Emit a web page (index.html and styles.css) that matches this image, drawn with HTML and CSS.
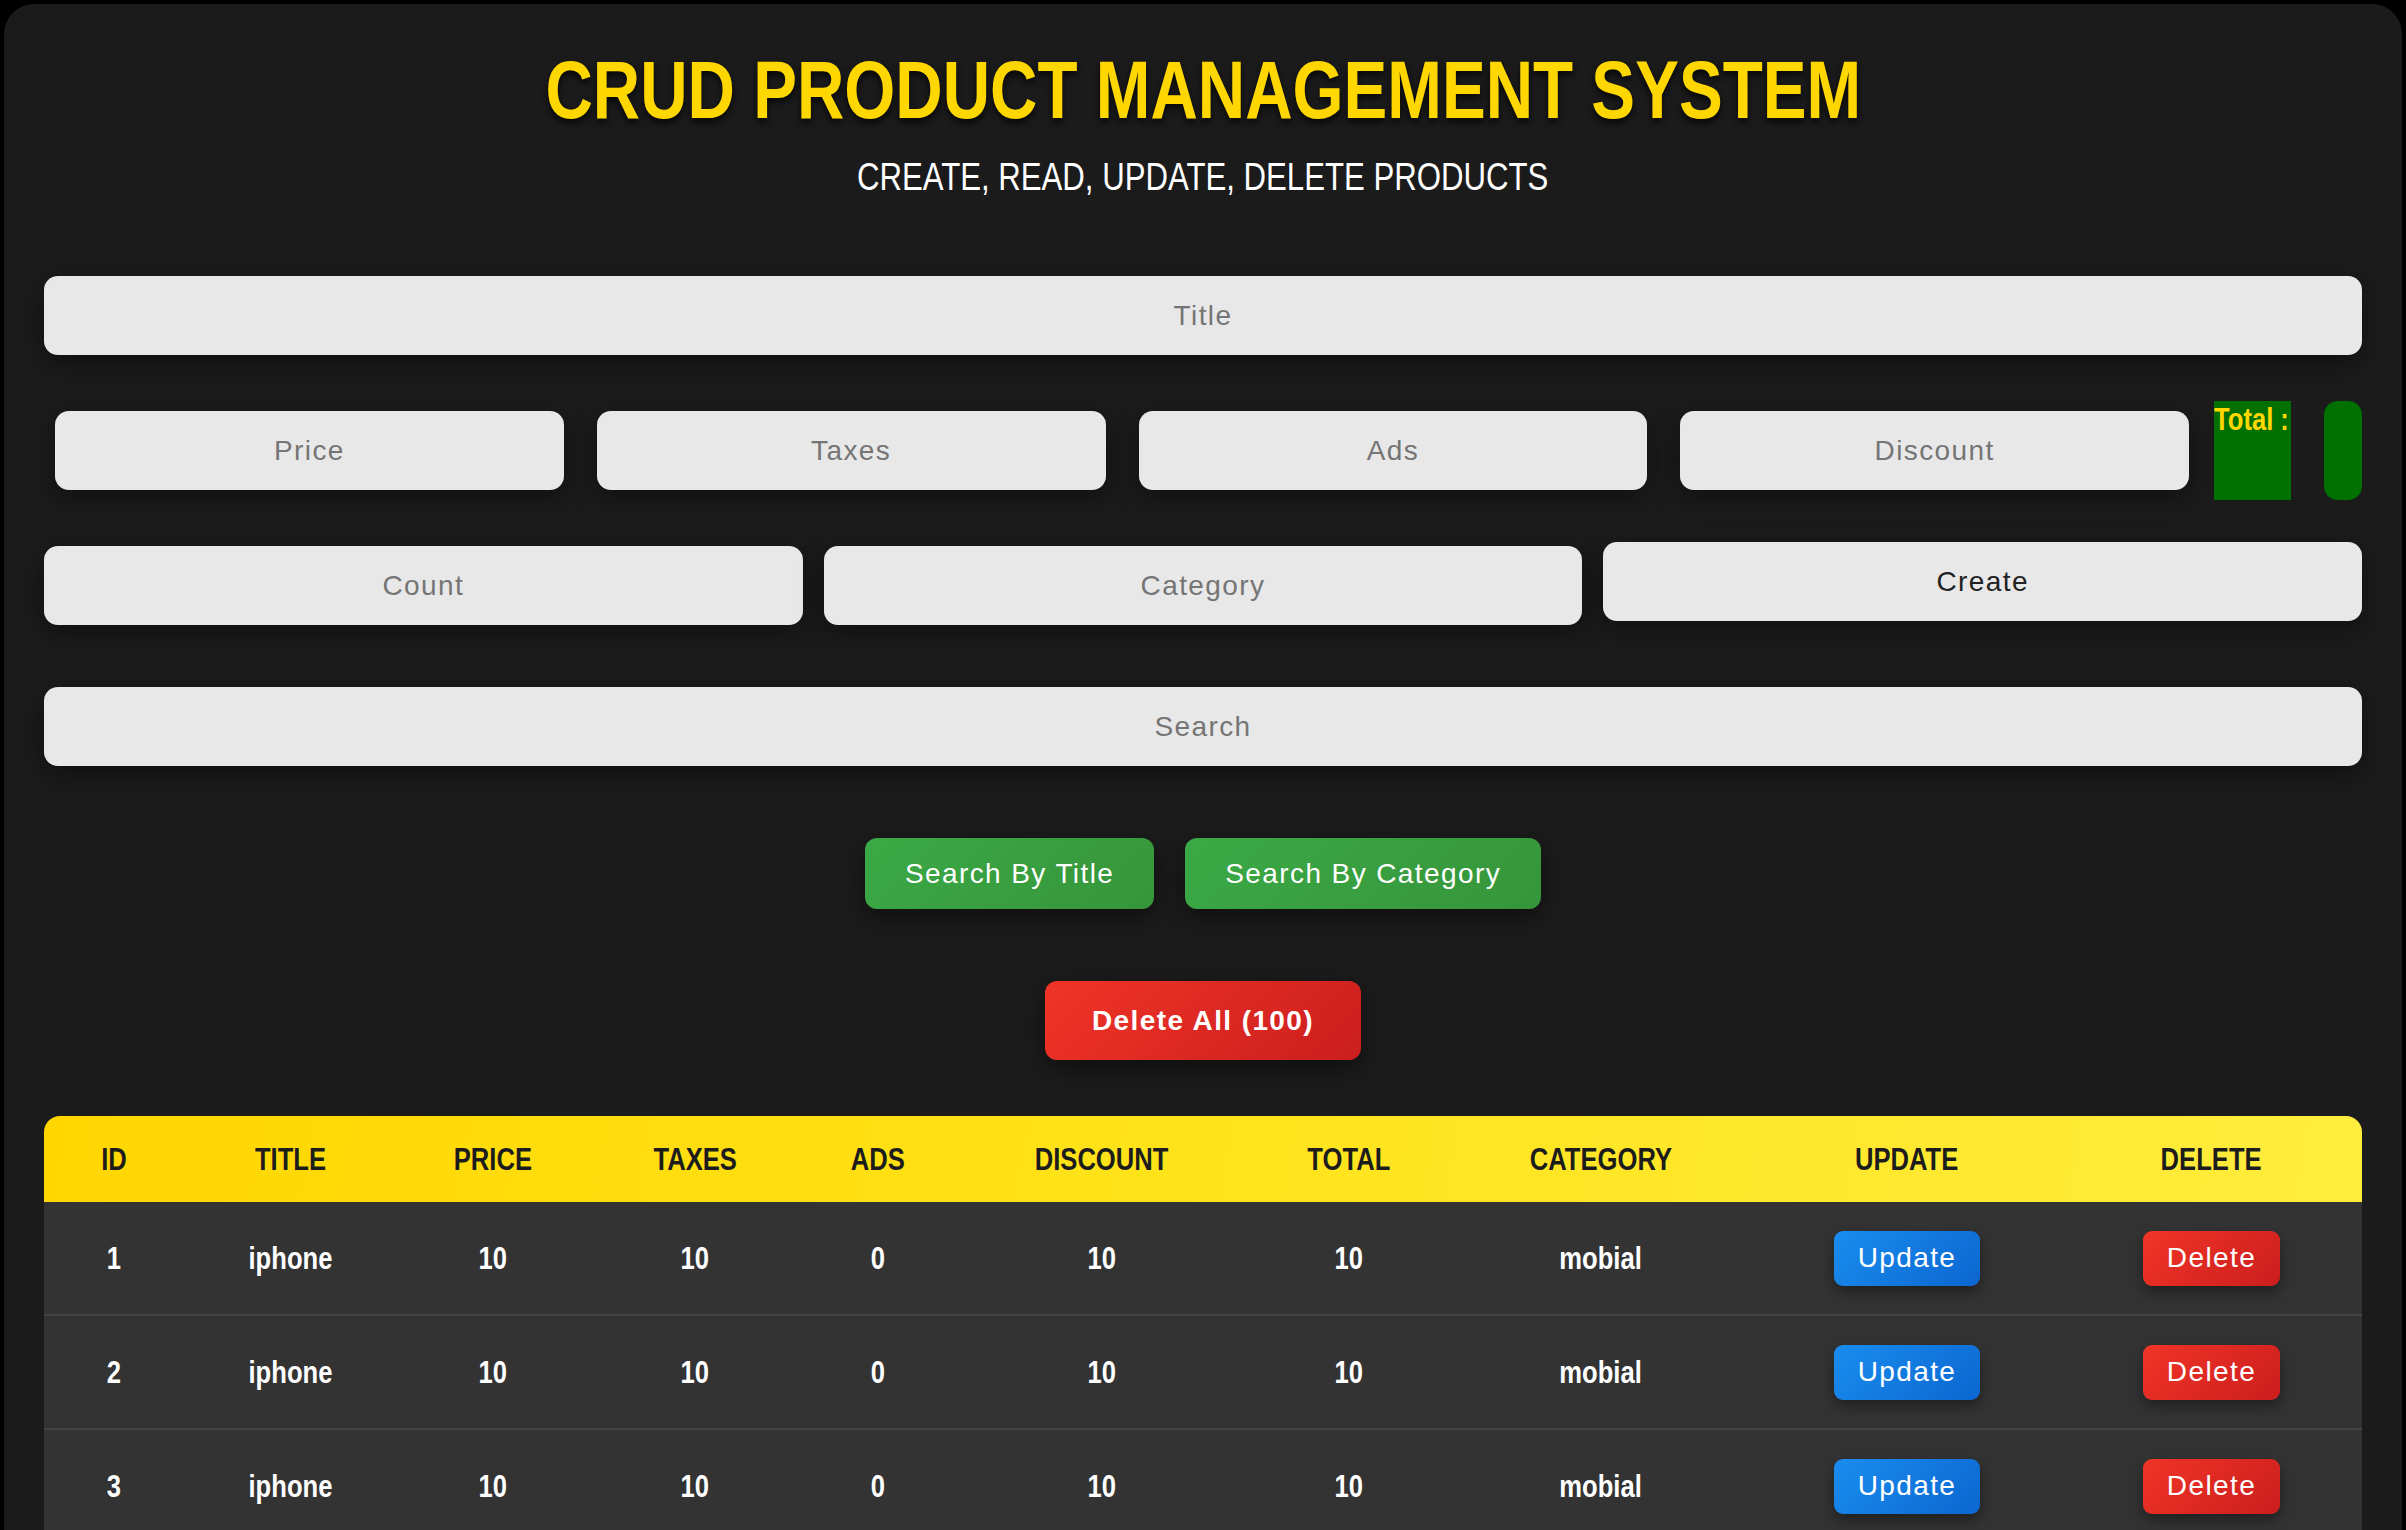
FILE: index.html
```html
<!DOCTYPE html>
<html lang="en">
<head>
<meta charset="utf-8">
<title>CRUD Product Management System</title>
<link rel="stylesheet" href="styles.css">
</head>
<body>
<div class="crud">
  <header class="head">
    <h1 class="head-title"><span class="narrow">CRUD PRODUCT MANAGEMENT SYSTEM</span></h1>
    <p class="head-sub"><span class="narrow">CREATE, READ, UPDATE, DELETE PRODUCTS</span></p>
  </header>

  <section class="form">
    <input class="field field-title" type="text" placeholder="Title">
    <div class="price-row">
      <input class="field field-small" type="text" placeholder="Price">
      <input class="field field-small" type="text" placeholder="Taxes">
      <input class="field field-small" type="text" placeholder="Ads">
      <input class="field field-small" type="text" placeholder="Discount">
      <span class="total-label"><span class="narrow narrow-left">Total :</span></span>
      <span class="total-value"></span>
    </div>
    <div class="count-row">
      <input class="field field-low" type="text" placeholder="Count">
      <input class="field field-low" type="text" placeholder="Category">
      <button class="btn-create" type="button">Create</button>
    </div>
  </section>

  <section class="search">
    <input class="field field-search" type="text" placeholder="Search">
    <div class="search-btns">
      <button class="btn-green" type="button">Search By Title</button>
      <button class="btn-green" type="button">Search By Category</button>
    </div>
  </section>

  <div class="delete-all">
    <button class="btn-delete-all" type="button">Delete All (100)</button>
  </div>

  <table class="products">
    <colgroup>
      <col class="c-id"><col class="c-title"><col class="c-price"><col class="c-taxes"><col class="c-ads">
      <col class="c-discount"><col class="c-total"><col class="c-category"><col class="c-update"><col class="c-delete">
    </colgroup>
    <thead>
      <tr>
        <th><span class="narrow">ID</span></th>
        <th><span class="narrow">Title</span></th>
        <th><span class="narrow">Price</span></th>
        <th><span class="narrow">Taxes</span></th>
        <th><span class="narrow">Ads</span></th>
        <th><span class="narrow">Discount</span></th>
        <th><span class="narrow">Total</span></th>
        <th><span class="narrow">Category</span></th>
        <th><span class="narrow">Update</span></th>
        <th><span class="narrow">Delete</span></th>
      </tr>
    </thead>
    <tbody>
      <tr>
        <td><span class="narrow">1</span></td>
        <td><span class="narrow">iphone</span></td>
        <td><span class="narrow">10</span></td>
        <td><span class="narrow">10</span></td>
        <td><span class="narrow">0</span></td>
        <td><span class="narrow">10</span></td>
        <td><span class="narrow">10</span></td>
        <td><span class="narrow">mobial</span></td>
        <td><button class="btn-row btn-update" type="button">Update</button></td>
        <td><button class="btn-row btn-del" type="button">Delete</button></td>
      </tr>
      <tr>
        <td><span class="narrow">2</span></td>
        <td><span class="narrow">iphone</span></td>
        <td><span class="narrow">10</span></td>
        <td><span class="narrow">10</span></td>
        <td><span class="narrow">0</span></td>
        <td><span class="narrow">10</span></td>
        <td><span class="narrow">10</span></td>
        <td><span class="narrow">mobial</span></td>
        <td><button class="btn-row btn-update" type="button">Update</button></td>
        <td><button class="btn-row btn-del" type="button">Delete</button></td>
      </tr>
      <tr>
        <td><span class="narrow">3</span></td>
        <td><span class="narrow">iphone</span></td>
        <td><span class="narrow">10</span></td>
        <td><span class="narrow">10</span></td>
        <td><span class="narrow">0</span></td>
        <td><span class="narrow">10</span></td>
        <td><span class="narrow">10</span></td>
        <td><span class="narrow">mobial</span></td>
        <td><button class="btn-row btn-update" type="button">Update</button></td>
        <td><button class="btn-row btn-del" type="button">Delete</button></td>
      </tr>
    </tbody>
  </table>
</div>
</body>
</html>
```

FILE: styles.css
```css
* {
  box-sizing: border-box;
}

html {
  overflow: hidden;
}

body {
  margin: 0;
  padding: 4px;
  background: #000;
  color: #fff;
  font-family: "Liberation Sans", Arial, sans-serif;
}

/* Arial-Narrow look: Liberation Sans squeezed horizontally */
.narrow {
  display: inline-block;
  white-space: nowrap;
  transform: scaleX(0.8);
  transform-origin: 50% 50%;
}

.narrow-left {
  transform-origin: 0 50%;
}

.crud {
  background: #1b1b1b;
  border-radius: 30px;
  padding: 38px 40px 60px;
}

/* Header */
.head {
  text-align: center;
}

.head-title {
  margin: 0;
  font-size: 82px;
  line-height: 96px;
  font-weight: 700;
  color: #ffd700;
  text-shadow: 0 4px 8px rgba(0, 0, 0, 0.75);
}

.head-sub {
  margin: 16px 0 0;
  font-size: 38px;
  line-height: 46px;
  font-weight: 400;
  color: #fff;
}

.head-sub .narrow {
  transform: scaleX(0.82);
}

/* Inputs */
.field {
  display: block;
  width: 100%;
  height: 79px;
  border: none;
  border-radius: 14px;
  background: #e8e8e8;
  color: #222;
  font-family: "Liberation Sans", Arial, sans-serif;
  font-size: 28px;
  letter-spacing: 1.4px;
  text-align: center;
  padding: 0 16px;
  outline: none;
  box-shadow: 0 8px 24px rgba(0, 0, 0, 0.4);
}

.field::placeholder {
  color: #757575;
}

.field-title {
  margin-top: 76px;
}

.price-row {
  display: flex;
  align-items: stretch;
  gap: 11px;
  height: 99px;
  margin-top: 46px;
}

.field-small {
  flex: 1 1 0;
  width: auto;
  min-width: 0;
  height: auto;
  margin: 10px 11px;
}

.total-label {
  flex: 0 0 77px;
  width: 77px;
  min-width: 0;
  margin-left: 3px;
  background: #007000;
  color: #ffd700;
  font-size: 32px;
  font-weight: 700;
  white-space: nowrap;
}

.total-value {
  flex: 0 0 38px;
  margin-left: 22px;
  border-radius: 14px;
  background: #007000;
}

.count-row {
  display: grid;
  grid-template-columns: 1fr 1fr 1fr;
  gap: 21px;
  align-items: start;
  margin-top: 42px;
}

.field-low {
  margin-top: 4px;
}

.btn-create {
  height: 79px;
  border: none;
  border-radius: 14px;
  background: #e8e8e8;
  color: #222;
  font-family: "Liberation Sans", Arial, sans-serif;
  font-size: 28px;
  letter-spacing: 1.4px;
  box-shadow: 0 8px 24px rgba(0, 0, 0, 0.4);
}

/* Search */
.field-search {
  margin-top: 62px;
}

.search-btns {
  display: flex;
  justify-content: center;
  gap: 31px;
  margin-top: 72px;
}

.btn-green {
  height: 71px;
  padding: 0 40px;
  border: none;
  border-radius: 12px;
  background: linear-gradient(135deg, #3ba946, #36953a);
  color: #fff;
  font-family: "Liberation Sans", Arial, sans-serif;
  font-size: 28px;
  letter-spacing: 1.4px;
  box-shadow: 0 8px 22px rgba(0, 0, 0, 0.45);
}

.delete-all {
  display: flex;
  justify-content: center;
  margin-top: 72px;
}

.btn-delete-all {
  height: 79px;
  padding: 0 47px;
  border: none;
  border-radius: 12px;
  background: linear-gradient(135deg, #f03427, #cb1e1e);
  color: #fff;
  font-family: "Liberation Sans", Arial, sans-serif;
  font-size: 28px;
  font-weight: 700;
  letter-spacing: 1.4px;
  box-shadow: 0 8px 22px rgba(0, 0, 0, 0.45);
}

/* Table */
.products {
  width: 100%;
  margin-top: 56px;
  border-collapse: separate;
  border-spacing: 0;
  table-layout: fixed;
  border-radius: 16px 16px 0 0;
  overflow: hidden;
  background: #333;
}

.c-id { width: 139px; }
.c-title { width: 214px; }
.c-price { width: 191px; }
.c-taxes { width: 214px; }
.c-ads { width: 152px; }
.c-discount { width: 296px; }
.c-total { width: 198px; }
.c-category { width: 305px; }
.c-update { width: 308px; }

.products thead {
  background: linear-gradient(100deg, #ffd600 0%, #ffe31a 50%, #ffec3d 100%);
}

.products th {
  height: 86px;
  padding: 0;
  color: #1c1c1c;
  font-size: 32px;
  font-weight: 700;
  text-transform: uppercase;
  text-align: center;
  vertical-align: middle;
}

.products td {
  height: 114px;
  padding: 0;
  border-bottom: 2px solid #444;
  color: #fff;
  font-size: 32px;
  font-weight: 700;
  text-align: center;
  vertical-align: middle;
}

.btn-row {
  height: 55px;
  padding: 0 24px;
  border: none;
  border-radius: 9px;
  color: #fff;
  font-family: "Liberation Sans", Arial, sans-serif;
  font-size: 28px;
  letter-spacing: 1.4px;
  box-shadow: 0 6px 14px rgba(0, 0, 0, 0.4);
}

.btn-update {
  background: linear-gradient(135deg, #1a8def, #0b66d0);
}

.btn-del {
  background: linear-gradient(135deg, #f03427, #cc1e1e);
}
```
